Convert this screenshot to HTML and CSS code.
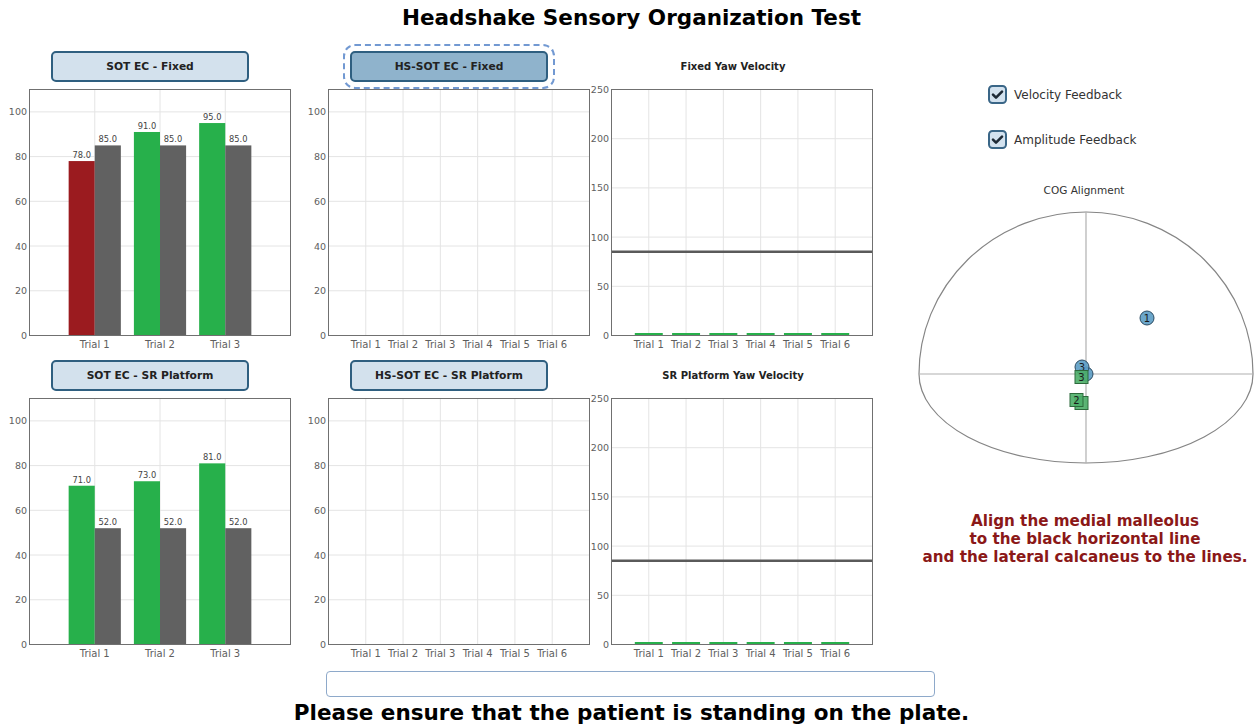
FILE: index.html
```html
<!DOCTYPE html>
<html lang="en">

<head>
    <meta charset="UTF-8">
    <meta name="viewport" content="width=device-width, initial-scale=1.0">
    <title>Headshake Sensory Organization Test</title>
    <link rel="stylesheet" href="styles.css">
</head>

<body>
    <h1 class="page-title">Headshake Sensory Organization Test</h1>

    <div class="main">
        <div class="charts">
            <div class="cell">
                <div class="cell-head"><button class="tab">SOT EC - Fixed</button></div>
                <svg class="chart" id="sotFixed" width="300" height="263"></svg>
            </div>
            <div class="cell">
                <div class="cell-head"><button class="tab active">HS-SOT EC - Fixed</button></div>
                <svg class="chart" id="hsFixed" width="290" height="263"></svg>
            </div>
            <div class="cell">
                <div class="cell-head"><div class="chart-title">Fixed Yaw Velocity</div></div>
                <svg class="chart" id="yawFixed" width="290" height="263"></svg>
            </div>
            <div class="cell">
                <div class="cell-head"><button class="tab">SOT EC - SR Platform</button></div>
                <svg class="chart" id="sotSr" width="300" height="263"></svg>
            </div>
            <div class="cell">
                <div class="cell-head"><button class="tab">HS-SOT EC - SR Platform</button></div>
                <svg class="chart" id="hsSr" width="290" height="263"></svg>
            </div>
            <div class="cell">
                <div class="cell-head"><div class="chart-title">SR Platform Yaw Velocity</div></div>
                <svg class="chart" id="yawSr" width="290" height="263"></svg>
            </div>
        </div>

        <aside class="side">
            <div class="options">
                <label class="option">
                    <svg class="check" width="19" height="19" viewBox="0 0 19 19">
                        <rect x="1" y="1" width="17" height="17" rx="3.5" />
                        <path d="M5 9.6 L8 12.6 L14 6.6" />
                    </svg>
                    Velocity Feedback
                </label>
                <label class="option">
                    <svg class="check" width="19" height="19" viewBox="0 0 19 19">
                        <rect x="1" y="1" width="17" height="17" rx="3.5" />
                        <path d="M5 9.6 L8 12.6 L14 6.6" />
                    </svg>
                    Amplitude Feedback
                </label>
            </div>

            <svg class="cog" width="338" height="290">
                <text class="cog-title" x="168" y="14" text-anchor="middle">COG Alignment</text>
                <path class="cog-plate" d="M3 194 A167 162 0 0 1 337 194 A167 89 0 0 1 3 194 Z" />
                <line class="cog-axis" x1="170" y1="32" x2="170" y2="283" />
                <line class="cog-axis" x1="3" y1="194" x2="337" y2="194" />

                <circle class="cog-dot" cx="231" cy="138" r="7" />
                <text class="cog-num" x="231" y="141.5">1</text>
                <circle class="cog-dot" cx="170" cy="194" r="7" />
                <circle class="cog-dot" cx="166" cy="187" r="7" />
                <text class="cog-num" x="166" y="190.5">3</text>

                <rect class="cog-box" x="159" y="190.5" width="13" height="13" />
                <text class="cog-num" x="165.5" y="200.5">3</text>
                <rect class="cog-box" x="159" y="216.5" width="13" height="13" />
                <rect class="cog-box" x="154" y="213.5" width="13" height="13" />
                <text class="cog-num" x="160.5" y="223.5">2</text>
            </svg>

            <p class="hint">Align the medial malleolus<br>to the black horizontal line<br>and the lateral calcaneus to the lines.</p>
        </aside>
    </div>

    <div class="footer">
        <input class="status" type="text">
        <p class="notice">Please ensure that the patient is standing on the plate.</p>
    </div>

    <script src="charts.js"></script>
</body>

</html>
```

FILE: styles.css
```css
html,
body {
    margin: 0;
    overflow: hidden;
}

body {
    width: 1254px;
    height: 725px;
    font-family: "DejaVu Sans", Verdana, sans-serif;
    color: #333;
    background: #fff;
}

.page-title {
    margin: 0;
    height: 43px;
    padding: 6px 0 0 9px;
    box-sizing: border-box;
    font-size: 21.5px;
    line-height: 24px;
    text-align: center;
    color: #000;
}

.main {
    display: flex;
}

.charts {
    flex: none;
    display: grid;
    grid-template-columns: 300px 290px 290px;
    grid-auto-rows: 309px;
}

.cell {
    display: flex;
    flex-direction: column;
}

.cell-head {
    flex: none;
    height: 46px;
    display: flex;
    align-items: center;
}

.tab {
    width: 198px;
    height: 31px;
    margin-left: 51px;
    box-sizing: border-box;
    border: 2px solid #2f5f80;
    border-radius: 5px;
    background-color: #d3e1ed;
    font-family: "DejaVu Sans", Verdana, sans-serif;
    font-size: 10.7px;
    font-weight: bold;
    color: #222;
    cursor: pointer;
}

.cell:nth-child(3n+2) .tab {
    margin-left: 50px;
}

.tab.active {
    background-color: #8fb3cc;
    outline: 2px dashed #7299d2;
    outline-offset: 5px;
}

.chart-title {
    width: 100%;
    padding-right: 4px;
    text-align: center;
    font-size: 10px;
    font-weight: bold;
    color: #222;
}

.chart {
    display: block;
    overflow: visible;
}

.chart .grid {
    stroke: #e4e4e4;
    stroke-width: 1;
}

.chart .frame {
    fill: none;
    stroke: #707070;
    stroke-width: 1;
}

.chart .tick {
    font-size: 10px;
    fill: #5e5e5e;
}

.chart .ytick {
    font-size: 9.5px;
    fill: #5e5e5e;
}

.chart .value {
    font-size: 8.3px;
    fill: #444;
}

.chart .limit {
    stroke: #5a5a5a;
    stroke-width: 2.5;
}

.side {
    width: 338px;
    margin-left: 36px;
}

.options {
    display: flex;
    flex-direction: column;
    gap: 26px;
    padding: 42px 0 0 72px;
}

.option {
    display: flex;
    align-items: center;
    gap: 7px;
    height: 19px;
    font-size: 12px;
    color: #333;
}

.check rect {
    fill: #d3e2ef;
    stroke: #3a6687;
    stroke-width: 2;
}

.check path {
    fill: none;
    stroke: #1e2a36;
    stroke-width: 2.6;
    stroke-linecap: round;
    stroke-linejoin: round;
}

.cog {
    display: block;
    margin-top: 31px;
}

.cog-title {
    font-size: 10.5px;
    fill: #333;
}

.cog-plate {
    fill: none;
    stroke: #858585;
    stroke-width: 1.2;
}

.cog-axis {
    stroke: #b0b0b0;
    stroke-width: 1.2;
}

.cog-dot {
    fill: #5b9cc4;
    fill-opacity: 0.9;
    stroke: #2c4b62;
    stroke-width: 1;
}

.cog-box {
    fill: #4cae68;
    fill-opacity: 0.9;
    stroke: #2d6a3c;
    stroke-width: 1;
}

.cog-num {
    font-size: 10px;
    fill: #1a1a1a;
    text-anchor: middle;
}

.hint {
    margin: 42px 0 0;
    text-align: center;
    font-size: 15.2px;
    font-weight: bold;
    line-height: 18px;
    color: #8b1818;
}

.status {
    display: block;
    width: 609px;
    height: 26px;
    margin: 10px 0 0 326px;
    box-sizing: border-box;
    border: 1px solid #8ea9ca;
    border-radius: 4px;
}

.notice {
    margin: 4px 0 0;
    padding-left: 9px;
    text-align: center;
    font-size: 21.5px;
    font-weight: bold;
    line-height: 24px;
    color: #000;
}
```

FILE: charts.js
```javascript
const NS = 'http://www.w3.org/2000/svg';
const RED = '#9b1b1f';
const GREEN = '#27b04b';
const GRAY = '#616161';

function el(tag, attrs, text) {
    const node = document.createElementNS(NS, tag);
    for (const k in attrs) node.setAttribute(k, attrs[k]);
    if (text !== undefined) node.textContent = text;
    return node;
}

function trials(n) {
    const list = [];
    for (let i = 1; i <= n; i++) list.push('Trial ' + i);
    return list;
}

function drawChart(id, opts) {
    const svg = document.getElementById(id);
    const left = opts.left, top = 0.5, w = 261, h = 246;
    const bottom = top + h;
    const y = v => bottom - v * h / opts.yMax;
    const step = w / (opts.labels.length + 1);
    const x = i => left + step * (i + 1);

    opts.yTicks.forEach(v => {
        if (v > 0 && v < opts.yMax) {
            svg.appendChild(el('line', { x1: left, x2: left + w, y1: y(v), y2: y(v), class: 'grid' }));
        }
        svg.appendChild(el('text', { x: left - 2.5, y: y(v) + 3.5, class: 'ytick', 'text-anchor': 'end' }, v));
    });

    opts.labels.forEach((label, i) => {
        svg.appendChild(el('line', { x1: x(i), x2: x(i), y1: top, y2: bottom, class: 'grid' }));
        svg.appendChild(el('text', { x: x(i), y: bottom + 12, class: 'tick', 'text-anchor': 'middle' }, label));
    });

    // score bars next to the reference bars
    if (opts.values) {
        const bw = step * 0.4;
        opts.values.forEach((v, i) => {
            const pairs = [[v, opts.colors[i], x(i) - bw], [opts.ref[i], GRAY, x(i)]];
            pairs.forEach(([val, color, bx]) => {
                svg.appendChild(el('rect', { x: bx, y: y(val), width: bw, height: bottom - y(val), fill: color }));
                svg.appendChild(el('text', { x: bx + bw / 2, y: y(val) - 3, class: 'value', 'text-anchor': 'middle' }, val.toFixed(1)));
            });
        });
    }

    // yaw velocity: flat bars and the target line
    if (opts.limit) {
        const bw = step * 0.75;
        opts.labels.forEach((label, i) => {
            svg.appendChild(el('rect', { x: x(i) - bw / 2, y: bottom - 2.5, width: bw, height: 2, fill: GREEN }));
        });
        svg.appendChild(el('line', { x1: left, x2: left + w, y1: y(opts.limit), y2: y(opts.limit), class: 'limit' }));
    }

    svg.appendChild(el('rect', { x: left, y: top, width: w, height: h, class: 'frame' }));
}

const scoreTicks = [0, 20, 40, 60, 80, 100];
const yawTicks = [0, 50, 100, 150, 200, 250];

drawChart('sotFixed', {
    left: 29.5, yMax: 110, yTicks: scoreTicks, labels: trials(3),
    values: [78, 91, 95], colors: [RED, GREEN, GREEN], ref: [85, 85, 85]
});
drawChart('hsFixed', { left: 28.5, yMax: 110, yTicks: scoreTicks, labels: trials(6) });
drawChart('yawFixed', { left: 21.5, yMax: 250, yTicks: yawTicks, labels: trials(6), limit: 85 });

drawChart('sotSr', {
    left: 29.5, yMax: 110, yTicks: scoreTicks, labels: trials(3),
    values: [71, 73, 81], colors: [GREEN, GREEN, GREEN], ref: [52, 52, 52]
});
drawChart('hsSr', { left: 28.5, yMax: 110, yTicks: scoreTicks, labels: trials(6) });
drawChart('yawSr', { left: 21.5, yMax: 250, yTicks: yawTicks, labels: trials(6), limit: 85 });
```
